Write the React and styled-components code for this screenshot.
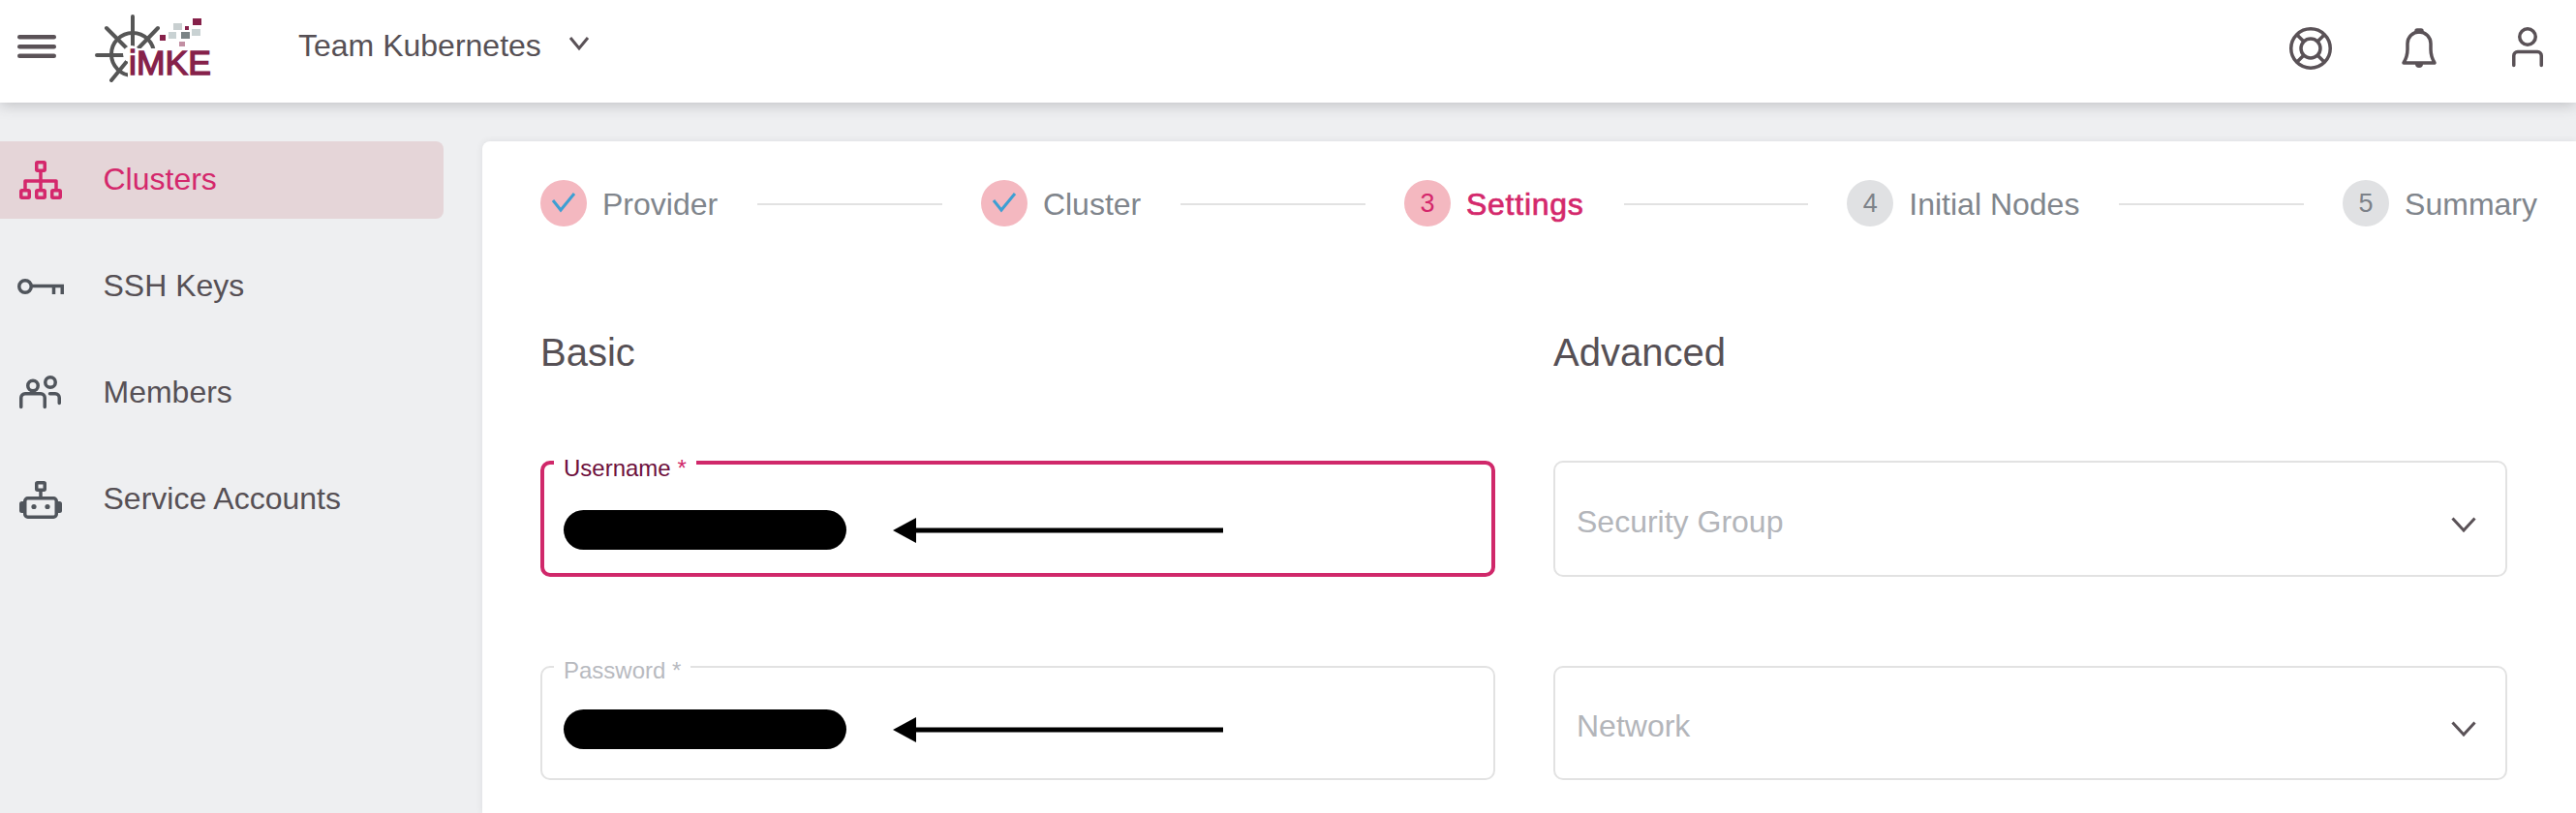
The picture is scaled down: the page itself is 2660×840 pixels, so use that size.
import * as React from "react";
import styled, { createGlobalStyle } from "styled-components";

const GlobalStyle = createGlobalStyle`
  html, body {
    margin: 0;
    padding: 0;
    background: #eeeff1;
  }
  * {
    box-sizing: border-box;
  }
`;

const Page = styled.div`
  display: flex;
  flex-direction: column;
  width: 2660px;
  height: 840px;
  overflow: hidden;
  background-color: #eeeff1;
  color: #565055;
  font-family: "Liberation Sans", Arial, sans-serif;
`;

const Header = styled.header`
  position: relative;
  z-index: 2;
  display: flex;
  align-items: center;
  flex: 0 0 106px;
  padding: 0 26px 6px 18px;
  background-color: #fff;
  box-shadow: 0 2px 14px rgba(60, 60, 70, 0.28);
`;

const Logo = styled.svg`
  display: block;
  width: 120px;
  height: 70px;
  margin: 0 90px 0 40px;
`;

const TeamName = styled.span`
  font-size: 32px;
  line-height: 40px;
  margin-bottom: 6px;
`;

const TeamChevron = styled.svg`
  display: block;
  width: 24px;
  height: 24px;
  margin: 0 0 8px 27px;
`;

const HeaderIcons = styled.div`
  display: flex;
  gap: 64px;
  margin-left: auto;
`;

const HeaderIcon = styled.svg`
  display: block;
  width: 48px;
  height: 48px;
  fill: none;
  stroke: #5a5257;
  stroke-width: 3.5;
  stroke-linecap: round;
  stroke-linejoin: round;
`;

const Body = styled.div`
  display: flex;
  flex: 1;
  min-height: 0;
`;

const Sidebar = styled.nav`
  display: flex;
  flex-direction: column;
  flex: 0 0 498px;
  gap: 30px;
  padding: 40px 40px 0 0;
`;

const NavItem = styled.div`
  display: flex;
  align-items: center;
  gap: 40.5px;
  height: 80px;
  padding-left: 18px;
  border-radius: 0 8px 8px 0;
  font-size: 32px;
  background-color: ${(p) => (p.$active ? "#e5d5d8" : "transparent")};
  color: ${(p) => (p.$active ? "#d4286c" : "#565055")};
`;

const NavText = styled.span`
  margin-bottom: 2px;
`;

const NavIcon = styled.svg`
  display: block;
  flex: none;
  width: 48px;
  height: 48px;
  fill: none;
  stroke: ${(p) => (p.$active ? "#d4286c" : "#50555c")};
  stroke-width: 3.5;
  stroke-linecap: round;
  stroke-linejoin: round;
`;

const Card = styled.main`
  flex: 1;
  margin-top: 40px;
  padding-top: 40px;
  background-color: #fff;
  border-radius: 8px 0 0 0;
  box-shadow: 0 0 6px rgba(60, 60, 70, 0.1);
`;

const Stepper = styled.div`
  display: flex;
  align-items: center;
  padding: 0 40px 0 60px;
`;

const Step = styled.div`
  display: flex;
  align-items: center;
  flex: none;
  gap: 16px;
`;

const StepCircle = styled.span`
  display: flex;
  align-items: center;
  justify-content: center;
  width: 48px;
  height: 48px;
  border-radius: 50%;
  font-size: 27px;
  background-color: ${(p) => (p.$state === "todo" ? "#e0e1e3" : "#f4b8c0")};
  color: ${(p) => (p.$state === "todo" ? "#7d8289" : "#d4286c")};
`;

const StepLabel = styled.span`
  font-size: 32px;
  line-height: 40px;
  margin-top: 1px;
  color: ${(p) => (p.$state === "current" ? "#d4286c" : "#80858c")};
  ${(p) =>
    p.$state === "current" &&
    "-webkit-text-stroke: 0.7px #d4286c; letter-spacing: 0.75px;"}
`;

const StepLine = styled.span`
  flex: 1;
  height: 2px;
  margin: 2px 40px 0 41px;
  background-color: #e2e2e2;
`;

const Columns = styled.div`
  display: grid;
  grid-template-columns: 986px 985px;
  grid-template-rows: 44px 120px 118px;
  column-gap: 60px;
  padding: 106px 0 0 60px;
  row-gap: 92px;
`;

const Heading = styled.h2`
  margin: 0;
  font-size: 40px;
  font-weight: 400;
  line-height: 48px;
  color: #565055;
`;

const Field = styled.div`
  position: relative;
  display: flex;
  align-items: center;
  padding: ${(p) => (p.$focused ? "23px 24px 0 20px" : "13px 24px 0 22px")};
  border: ${(p) => (p.$focused ? "4px solid #d0286a" : "2px solid #e2e2e2")};
  border-radius: 10px;
`;

const FieldLabel = styled.label`
  position: absolute;
  top: ${(p) => (p.$focused ? "-10px" : "-11px")};
  left: ${(p) => (p.$focused ? "10px" : "12px")};
  padding: 0 10px;
  background-color: #fff;
  font-size: 24px;
  line-height: 28px;
  color: ${(p) => (p.$focused ? "#6d0f3c" : "#b8babf")};
`;

const Asterisk = styled.span`
  color: ${(p) => (p.$focused ? "#d0286a" : "#b8babf")};
`;

const Redaction = styled.div`
  flex: none;
  width: 292px;
  height: 41px;
  border-radius: 20.5px;
  background-color: #000;
`;

const Arrow = styled.svg`
  display: block;
  flex: none;
  width: 341px;
  height: 26px;
  margin-left: 48px;
`;

const Select = styled.div`
  display: flex;
  align-items: center;
  justify-content: space-between;
  padding: 6px 30px 0 22px;
  border: 2px solid #e2e2e2;
  border-radius: 10px;
`;

const Placeholder = styled.span`
  font-size: 32px;
  line-height: 40px;
  color: #b3b5ba;
`;

const SelectChevron = styled.svg`
  display: block;
  width: 26px;
  height: 16px;
  margin-top: 6px;
  fill: none;
  stroke: #5a5257;
  stroke-width: 3;
`;

const steps = [
  { label: "Provider", state: "done" },
  { label: "Cluster", state: "done" },
  { label: "Settings", number: 3, state: "current" },
  { label: "Initial Nodes", number: 4, state: "todo" },
  { label: "Summary", number: 5, state: "todo" },
];

const navItems = [
  {
    label: "Clusters",
    active: true,
    icon: (
      <>
        <rect x="19.75" y="5.75" width="8.5" height="8.5" rx="1" />
        <rect x="3.75" y="34.75" width="8.5" height="7.5" rx="1" />
        <rect x="19.75" y="34.75" width="8.5" height="7.5" rx="1" />
        <rect x="35.75" y="34.75" width="8.5" height="7.5" rx="1" />
        <path d="M24 16V33M8 33V25H40V33" strokeLinecap="butt" />
      </>
    ),
  },
  {
    label: "SSH Keys",
    icon: (
      <>
        <circle cx="8" cy="24" r="6.25" />
        <path d="M14.5 23.5H46.25V32M37.5 23.5V32" strokeLinecap="butt" strokeLinejoin="miter" />
      </>
    ),
  },
  {
    label: "Members",
    icon: (
      <>
        <circle cx="16" cy="16.5" r="5.25" />
        <circle cx="34" cy="13" r="5.25" />
        <path d="M3.75 38.5V29a4.25 4.25 0 0 1 4.25-4.25H24a4.25 4.25 0 0 1 4.25 4.25V38.5" />
        <path d="M33.5 24.75H39a4.25 4.25 0 0 1 4.25 4.25V34.5" />
      </>
    ),
  },
  {
    label: "Service Accounts",
    icon: (
      <>
        <rect x="19.75" y="6.75" width="8.5" height="7.5" rx="1" />
        <path d="M24 15V21" strokeLinecap="butt" />
        <rect x="7.75" y="22.75" width="32.5" height="19.5" rx="3" />
        <path d="M6 26H4.5A2.5 2.5 0 0 0 2 28.5V35.5A2.5 2.5 0 0 0 4.5 38H6Z" fill="#50555c" stroke="none" />
        <path d="M42 26H43.5A2.5 2.5 0 0 1 46 28.5V35.5A2.5 2.5 0 0 1 43.5 38H42Z" fill="#50555c" stroke="none" />
        <circle cx="17" cy="31.5" r="2.6" fill="#50555c" stroke="none" />
        <circle cx="31" cy="31.5" r="2.6" fill="#50555c" stroke="none" />
      </>
    ),
  },
];

const LogoMark = () => (
  <Logo viewBox="98 15 120 70">
    <g fill="none" stroke="#565656" strokeLinecap="round">
      <circle cx="137" cy="56" r="22" strokeWidth="4" />
      <path
        d="M137 17V56M100 57H137M110 29L137 56M163 29L137 56M115 83L137 56"
        strokeWidth="4"
      />
    </g>
    <circle cx="136" cy="56" r="9" fill="#fff" />
    <rect x="132" y="50" width="86" height="35" fill="#fff" />
    <text
      x="133"
      y="77"
      fontFamily="Liberation Sans, Arial, sans-serif"
      fontSize="35.5"
      fill="#86214a"
      stroke="#86214a"
      strokeWidth="1.4"
    >
      iMKE
    </text>
    <rect x="199" y="19" width="9" height="7" fill="#86214a" />
    <rect x="179" y="24" width="9" height="7" fill="#c8cfd0" />
    <rect x="191" y="27" width="4" height="4" fill="#86214a" />
    <rect x="174" y="33" width="8" height="7" fill="#c9d2d3" />
    <rect x="187" y="33" width="9" height="7" fill="#7b8486" />
    <rect x="198" y="30" width="9" height="7" fill="#c9d2d3" />
    <rect x="185" y="43" width="6" height="5" fill="#c28fa3" />
    <rect x="165" y="36" width="6" height="6" fill="#86214a" />
  </Logo>
);

const CheckMark = () => (
  <svg width="48" height="48" viewBox="0 0 48 48" fill="none">
    <path d="M13 21L21 31L35 14" stroke="#3d9fd3" strokeWidth="3" />
  </svg>
);

const ArrowMark = () => (
  <Arrow viewBox="0 0 341 26">
    <path d="M0 13L24 0V26Z" fill="#000" />
    <rect x="22" y="10.5" width="319" height="5" fill="#000" />
  </Arrow>
);

const Chevron = () => (
  <SelectChevron viewBox="0 0 26 16">
    <path d="M1.5 1.5L13 14L24.5 1.5" />
  </SelectChevron>
);

const App = () => (
  <Page>
    <GlobalStyle />
    <Header>
      <svg width="40" height="24" viewBox="0 0 40 24" fill="#5a5257" style={{ marginBottom: 4 }}>
        <rect y="0" width="40" height="4.5" rx="2.2" />
        <rect y="10" width="40" height="4.5" rx="2.2" />
        <rect y="19.5" width="40" height="4.5" rx="2.2" />
      </svg>
      <LogoMark />
      <TeamName>Team Kubernetes</TeamName>
      <TeamChevron viewBox="0 0 24 24" fill="none">
        <path d="M3 5L12 16L21 5" stroke="#5a5257" strokeWidth="3" />
      </TeamChevron>
      <HeaderIcons>
        <HeaderIcon viewBox="0 0 48 48">
          <circle cx="24" cy="24" r="20.25" />
          <circle cx="24" cy="24" r="10" />
          <path d="M17 17L9.7 9.7M31 17L38.3 9.7M17 31L9.7 38.3M31 31L38.3 38.3" strokeLinecap="butt" />
        </HeaderIcon>
        <HeaderIcon viewBox="0 0 48 48">
          <path d="M8 39C11 34 12 31 12 25V19A12 12 0 0 1 36 19V25C36 31 37 34 40 39Z" />
          <rect x="21" y="5" width="6" height="2" rx="1" />
          <path d="M20 40A4 4 0 0 0 28 40Z" fill="#5a5257" stroke="none" />
        </HeaderIcon>
        <HeaderIcon viewBox="0 0 48 48">
          <circle cx="24" cy="12" r="8.25" />
          <path d="M9.75 41.5V31.5A4 4 0 0 1 13.75 27.5H34.25A4 4 0 0 1 38.25 31.5V41.5" />
        </HeaderIcon>
      </HeaderIcons>
    </Header>
    <Body>
      <Sidebar>
        {navItems.map((item) => (
          <NavItem key={item.label} $active={item.active}>
            <NavIcon viewBox="0 0 48 48" $active={item.active}>
              {item.icon}
            </NavIcon>
            <NavText>{item.label}</NavText>
          </NavItem>
        ))}
      </Sidebar>
      <Card>
        <Stepper>
          {steps.map((step, i) => (
            <React.Fragment key={step.label}>
              <Step>
                <StepCircle $state={step.state}>
                  {step.number || <CheckMark />}
                </StepCircle>
                <StepLabel $state={step.state}>{step.label}</StepLabel>
              </Step>
              {i < steps.length - 1 && <StepLine />}
            </React.Fragment>
          ))}
        </Stepper>
        <Columns>
          <Heading>Basic</Heading>
          <Heading>Advanced</Heading>
          <Field $focused>
            <FieldLabel $focused>
              Username <Asterisk $focused>*</Asterisk>
            </FieldLabel>
            <Redaction />
            <ArrowMark />
          </Field>
          <Select>
            <Placeholder>Security Group</Placeholder>
            <Chevron />
          </Select>
          <Field>
            <FieldLabel>
              Password <Asterisk>*</Asterisk>
            </FieldLabel>
            <Redaction />
            <ArrowMark />
          </Field>
          <Select>
            <Placeholder>Network</Placeholder>
            <Chevron />
          </Select>
        </Columns>
      </Card>
    </Body>
  </Page>
);

export default App;
